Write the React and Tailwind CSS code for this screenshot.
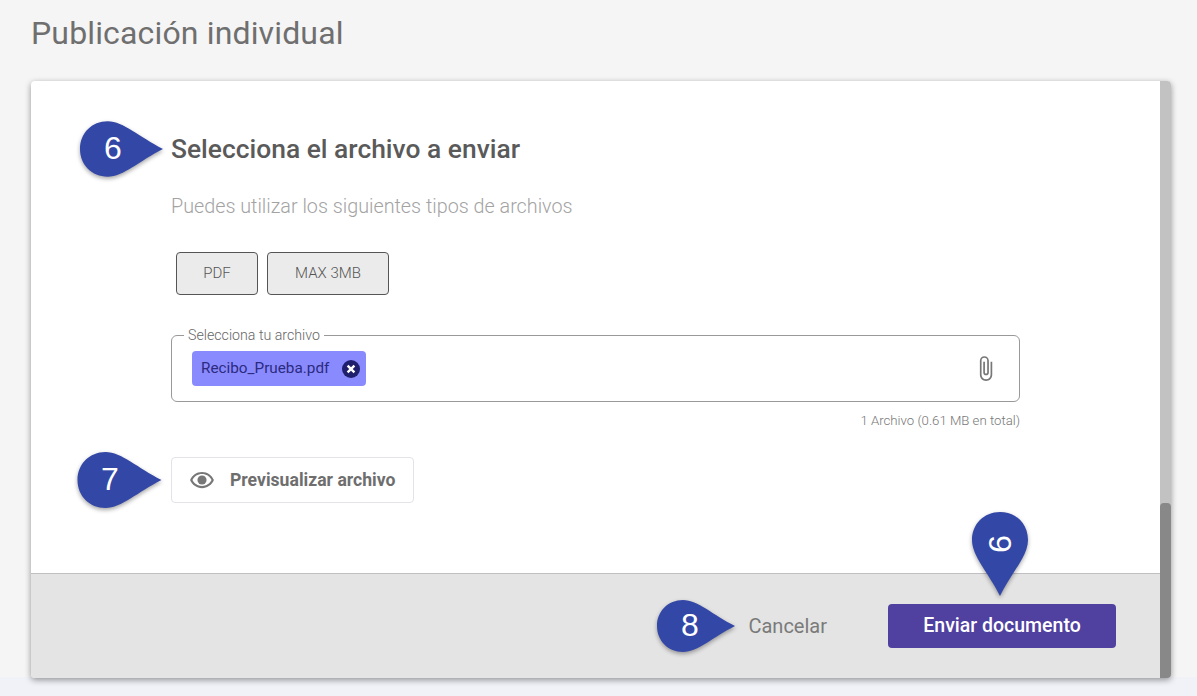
import { MdAttachFile } from 'react-icons/md';

const Pin = ({ label, className, vertical = false }) => (
  <div className={`absolute ${className}`}>
    <svg
      viewBox={vertical ? '0 0 56 84' : '0 0 84 56'}
      className="w-full h-full overflow-visible drop-shadow-[0_2px_2px_rgba(0,0,0,0.35)]"
    >
      {vertical ? (
        <path d="M28 0C44 0 56 12 56 28C56 44 40 60 28 84C16 60 0 44 0 28C0 12 12 0 28 0Z" fill="#3347a6" />
      ) : (
        <path d="M28 0C44 0 60 16 84 28C60 40 44 56 28 56C12 56 0 44 0 28C0 12 12 0 28 0Z" fill="#3347a6" />
      )}
    </svg>
    <span
      className={`absolute text-white text-[32px] leading-none font-['Liberation_Sans',sans-serif] ${
        vertical ? 'left-[19px] top-[16px] rotate-90' : 'left-[24px] top-[11px]'
      }`}
    >
      {label}
    </span>
  </div>
);

// outlined eye with a solid pupil
const EyeIcon = ({ className }) => (
  <svg viewBox="0 0 24 24" fill="currentColor" className={className}>
    <path d="M12 6.5c3.79 0 7.17 2.13 8.82 5.5-1.65 3.37-5.02 5.5-8.82 5.5S4.83 15.37 3.18 12C4.83 8.63 8.21 6.5 12 6.5m0-2C7 4.5 2.73 7.61 1 12c1.73 4.39 6 7.5 11 7.5s9.27-3.11 11-7.5c-1.73-4.39-6-7.5-11-7.5z" />
    <circle cx="12" cy="12" r="4.2" />
  </svg>
);

const RemoveIcon = () => (
  <svg viewBox="0 0 18 18" className="w-[18px] h-[18px] ml-[2px]">
    <circle cx="9" cy="9" r="9" fill="#1f1f6e" />
    <path d="M5.6 5.6L12.4 12.4M12.4 5.6L5.6 12.4" stroke="#ffffff" strokeWidth="2.4" />
  </svg>
);

export default function App() {
  return (
    <div className="h-[696px] overflow-hidden bg-[linear-gradient(#f5f5f5_97.27%,#f1f2f8_97.27%)] px-[31px] font-['Roboto',sans-serif]">
      <h1 className="pt-[14px] h-[81px] text-[32px] leading-[38px] tracking-[0.15px] text-[#6f6f6f]">
        Publicación individual
      </h1>

      <div className="relative flex w-[1140px] h-[597px] bg-white rounded-[4px] overflow-hidden shadow-[0_2px_6px_rgba(0,0,0,0.4)]">
        <div className="flex flex-col flex-1">
          <div className="flex-1 pl-[140px] pt-[50px]">
            <h2 className="text-[26.4px] leading-[36px] font-medium text-[#5a5a5a]">
              Selecciona el archivo a enviar
            </h2>
            <p className="mt-[28px] text-[19.75px] leading-[24px] font-light text-[#a3a3a3]">
              Puedes utilizar los siguientes tipos de archivos
            </p>

            <div className="flex gap-[9px] ml-[5px] mt-[33px]">
              <div className="flex items-center justify-center w-[82px] h-[43px] rounded-[4px] border border-[#555555] bg-[#ebebeb] text-[15px] font-light text-[#555555]">
                PDF
              </div>
              <div className="flex items-center justify-center w-[122px] h-[43px] rounded-[4px] border border-[#555555] bg-[#ebebeb] text-[15px] font-light text-[#555555]">
                MAX 3MB
              </div>
            </div>

            <div className="relative flex items-center justify-between w-[849px] h-[67px] mt-[40px] pl-[20px] pr-[20px] rounded-[6px] border border-[#999999]">
              <span className="absolute left-[12px] -top-[10px] bg-white px-[4px] text-[14.2px] leading-[18px] font-light text-[#666666]">
                Selecciona tu archivo
              </span>
              <div className="flex items-center gap-[11px] w-[174px] h-[35px] pl-[9px] rounded-[4px] bg-[#8a8aff] text-[15.3px] text-[#2b2b80]">
                Recibo_Prueba.pdf
                <RemoveIcon />
              </div>
              <MdAttachFile className="w-[27px] h-[27px] text-[#777777]" />
            </div>
            <p className="w-[849px] mt-[10px] text-right text-[13.2px] leading-[18px] font-light text-[#777777]">
              1 Archivo (0.61 MB en total)
            </p>

            <button className="flex items-center gap-[15px] w-[243px] h-[46px] mt-[27px] pl-[17px] rounded-[4px] border border-[#e2e2e8] text-[17.6px] font-bold text-[#6e6e6e]">
              <EyeIcon className="w-[26px] h-[26px] text-[#777777]" />
              Previsualizar archivo
            </button>
          </div>

          <div className="flex items-center justify-end h-[105px] pr-[44px] border-t border-[#c0c0c0] bg-[#e4e4e4]">
            <span className="text-[20px] font-normal text-[#7a7a7a]">Cancelar</span>
            <button className="w-[228px] h-[44px] ml-[61px] rounded-[4px] bg-[#5040a0] text-[19.5px] font-medium text-white">
              Enviar documento
            </button>
          </div>
        </div>

        <div className="flex flex-col justify-end w-[11px] bg-[#c2c2c2]">
          <div className="h-[175px] rounded-t-[4px] bg-[#888888]" />
        </div>

        <Pin label="6" className="left-[49px] top-[40px] w-[83px] h-[56px]" />
        <Pin label="7" className="left-[46px] top-[371px] w-[85px] h-[56px]" />
        <Pin label="8" className="left-[626px] top-[517px] w-[78px] h-[56px]" />
        <Pin label="9" vertical className="left-[941px] top-[431px] w-[56px] h-[84px]" />
      </div>
    </div>
  );
}
